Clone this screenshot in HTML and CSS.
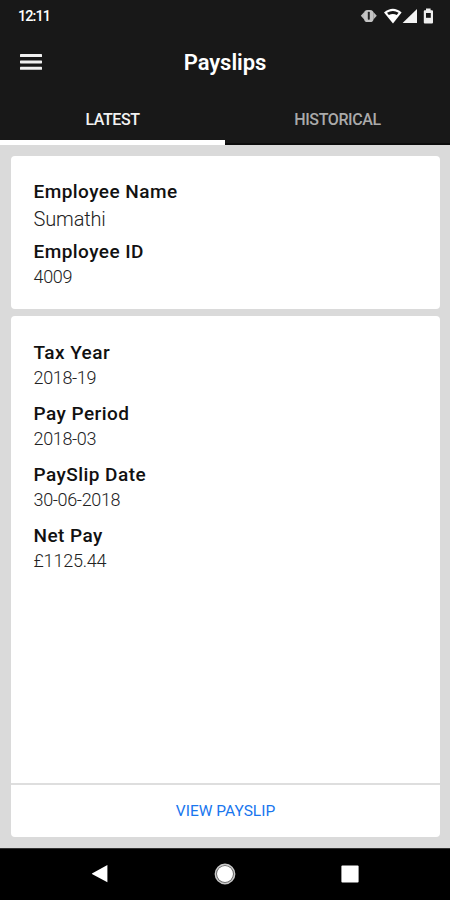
FILE: index.html
```
<!DOCTYPE html>
<html lang="en">
<head>
<meta charset="utf-8">
<title>Payslips</title>
<link rel="stylesheet" href="styles.css">
</head>
<body>
<div class="app">
  <header class="header">
    <div class="status">
      <span class="clock">12:11</span>
      <svg class="status-icons" width="76" height="20" viewBox="0 0 76 20">
        <path d="M1.8 9.7L5.2 5.9V13.5ZM17.8 9.7L14.4 5.9V13.5Z" fill="#bbb"/>
        <rect x="5" y="4" width="9.6" height="12" rx="3.6" fill="#c4c4c4"/>
        <rect x="8.8" y="5.8" width="2" height="8" rx=".8" fill="#222"/>
        <path d="M25 6.4Q34 -1 42.6 6.4L34 17.4Z" fill="#fff"/>
        <path d="M28 6.8Q34 3.2 39.6 6.8L37.8 9Q34 7.2 29.8 9Z" fill="#181818"/>
        <path d="M58 3V17H43.6Z" fill="#f4f4f4"/>
        <path d="M67 2.6H71.6V4.2H73Q74 4.2 74 5.2V16.4Q74 17.4 73 17.4H65.8Q64.8 17.4 64.8 16.4V5.2Q64.8 4.2 65.8 4.2H67Z" fill="#eee"/>
        <rect x="67" y="7" width="4.8" height="4.8" fill="#181818"/>
      </svg>
    </div>
    <div class="toolbar">
      <svg class="menu" width="22" height="16" viewBox="0 0 22 16" fill="#f0f0f0">
        <rect width="22" height="3" rx=".6"/><rect y="6.4" width="22" height="3" rx=".6"/><rect y="12.8" width="22" height="3" rx=".6"/>
      </svg>
      <h1 class="title">Payslips</h1>
    </div>
    <nav class="tabs">
      <span class="tab active">LATEST</span>
      <span class="tab historical">HISTORICAL</span>
    </nav>
  </header>
  <main class="content">
    <section class="card employee">
      <dl>
        <dt>Employee Name</dt><dd class="name">Sumathi</dd>
        <dt>Employee ID</dt><dd>4009</dd>
      </dl>
    </section>
    <section class="card payslip">
      <dl>
        <dt>Tax Year</dt><dd>2018-19</dd>
        <dt>Pay Period</dt><dd>2018-03</dd>
        <dt>PaySlip Date</dt><dd>30-06-2018</dd>
        <dt>Net Pay</dt><dd class="amount">£1125.44</dd>
      </dl>
      <a class="view">VIEW PAYSLIP</a>
    </section>
  </main>
  <footer class="nav">
    <svg width="18" height="20" viewBox="0 0 18 20"><path d="M1.4 9.3L16.4 .9V18.3L1.4 10.3Q.2 9.8 1.4 9.3Z" fill="#fff"/></svg>
    <svg width="22" height="22" viewBox="0 0 22 22"><circle cx="11" cy="11" r="9.6" fill="#555" stroke="#c8c8c8" stroke-width="1.6"/><circle cx="11" cy="11" r="8" fill="#fff"/></svg>
    <svg width="18" height="18" viewBox="0 0 18 18"><rect x=".4" y=".4" width="17.2" height="17.2" rx="1" fill="#fff"/></svg>
  </footer>
</div>
</body>
</html>
```
FILE: styles.css
```
* { box-sizing: border-box; margin: 0; padding: 0; }
body { font-family: Roboto, sans-serif; }
.app { width: 450px; height: 900px; display: flex; flex-direction: column; background: #dadada; overflow: hidden; }
.header { height: 145px; background: #181818; color: #fff; flex: none; }
.status { height: 34px; padding: 6px 15px 0 18px; display: flex; justify-content: space-between; }
.clock { font-size: 14.5px; line-height: 21px; font-weight: 500; letter-spacing: -.95px; }
.toolbar { height: 58px; display: grid; grid-template-columns: 50px 1fr 50px; align-items: center; }
.menu { margin-left: 20px; margin-top: -3px; }
.title { font-size: 22px; line-height: 28px; font-weight: 600; text-align: center; letter-spacing: -.05px; }
.tabs { height: 53px; display: flex; }
.tab { flex: 1; text-align: center; padding-top: 18px; font-size: 16px; line-height: 20px; font-weight: 500; letter-spacing: -.4px; border-bottom: 2px solid #0c0c0c; }
.active { color: #f2f2f2; border-bottom: 5px solid #fff; }
.historical { color: #aaa; }
.content { flex: 1; padding: 11px 10px 11px 11px; display: flex; flex-direction: column; gap: 7px; }
.card { background: #fff; border-radius: 4px; color: #111; }
.employee { height: 153px; padding: 23px 22px 23px 22.5px; }
.payslip { flex: 1; padding-top: 23.5px; display: flex; flex-direction: column; }
.payslip dl { padding: 0 22px 0 22.5px; flex: 1; }
dt { font-size: 19px; line-height: 26px; font-weight: 500; letter-spacing: .45px; }
dd { font-size: 18px; line-height: 24px; margin-bottom: 11.3px; font-weight: 300; color: #222; letter-spacing: -.35px; }
.amount { letter-spacing: -.2px; }
.name { font-size: 20px; line-height: 28px; margin-bottom: 6px; letter-spacing: -.15px; }
.view { height: 54px; border-top: 2px solid #dedede; color: #1976ee; font-size: 15.5px; line-height: 53px; text-align: center; }
.nav { height: 52px; background: #000; border-top: 1px solid #333; display: flex; align-items: center; justify-content: center; gap: 105px; flex: none; }
.nav svg { margin-top: -1px; }
```
